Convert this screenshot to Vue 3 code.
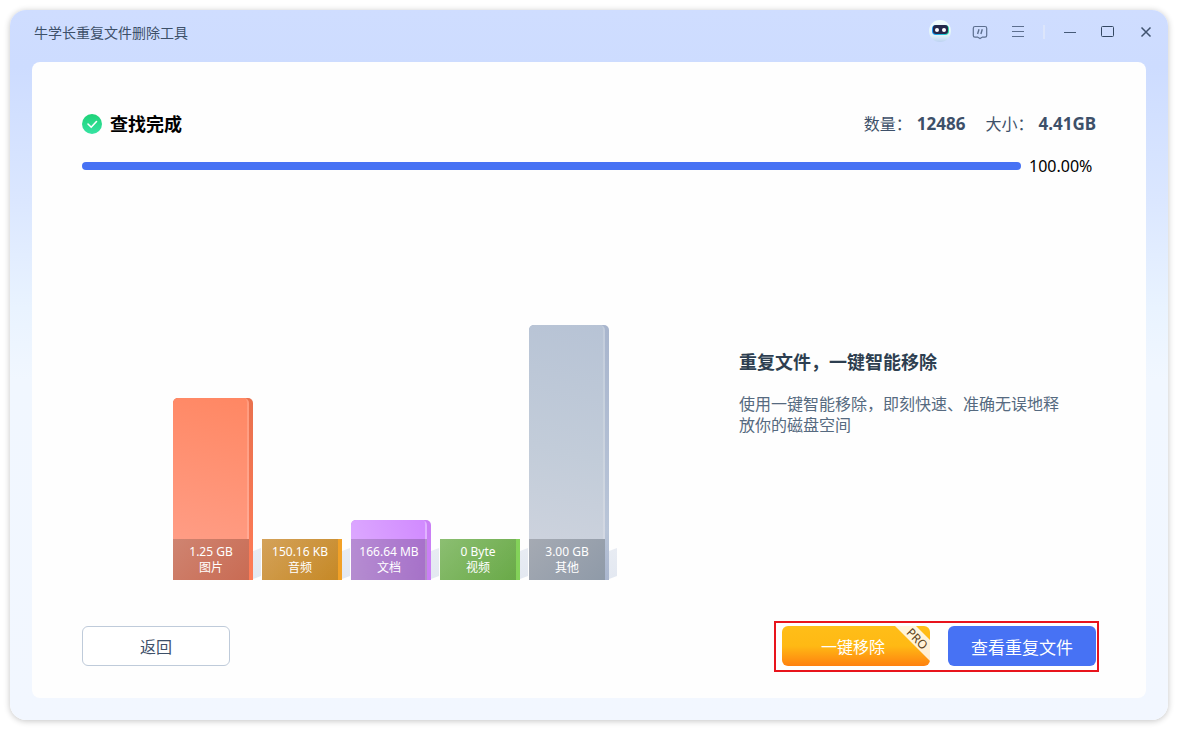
<script setup>
const bars = [
  { key: 'image', size: '1.25 GB', label: '图片', height: 182 },
  { key: 'audio', size: '150.16 KB', label: '音频', height: 41 },
  { key: 'doc', size: '166.64 MB', label: '文档', height: 60 },
  { key: 'video', size: '0 Byte', label: '视频', height: 41 },
  { key: 'other', size: '3.00 GB', label: '其他', height: 255 },
]
</script>

<template>
  <div class="window">
    <header class="titlebar">
      <h1 class="app-name">牛学长重复文件删除工具</h1>
      <nav class="tools">
        <button type="button" class="tool" aria-label="助手">
          <svg width="24" height="26" viewBox="0 0 24 26">
            <defs>
              <linearGradient id="head" x1="0" y1="0" x2="0" y2="1">
                <stop offset="0" stop-color="#f2fdfd" />
                <stop offset="0.7" stop-color="#e0f1f8" />
                <stop offset="1" stop-color="#bdd3f2" />
              </linearGradient>
              <linearGradient id="rim" x1="0" y1="0" x2="1" y2="0">
                <stop offset="0" stop-color="#168df0" />
                <stop offset="0.7" stop-color="#20c8d8" />
                <stop offset="1" stop-color="#22d69a" />
              </linearGradient>
            </defs>
            <circle cx="12" cy="12" r="11" fill="url(#head)" />
            <rect x="4" y="6" width="17" height="10" rx="4" fill="url(#rim)" />
            <rect x="5" y="6" width="15" height="9" rx="3" fill="#242849" />
            <circle cx="9" cy="11" r="2" fill="#fff" />
            <circle cx="16" cy="11" r="2" fill="#fff" />
          </svg>
        </button>
        <button type="button" class="tool" aria-label="反馈">
          <svg width="16" height="16" viewBox="0 0 16 16" fill="none" stroke="#5d6f8f" stroke-width="1.200">
            <path d="M3 2.500h10a1.700 1.700 0 0 1 1.700 1.700v7.200a1.700 1.700 0 0 1-1.700 1.700h-2.500L8 14.500l-2.500-1.400H3a1.700 1.700 0 0 1-1.700-1.700V4.200A1.700 1.700 0 0 1 3 2.500z" />
            <path d="M7 5.200L5.600 10M10.300 5.200L8.900 10" stroke-width="1.400" />
          </svg>
        </button>
        <button type="button" class="tool" aria-label="菜单">
          <svg width="16" height="16" viewBox="0 0 16 16" stroke="#5d6f8f">
            <path d="M2 2.500h12M2 7.500h12M2 12.500h12" />
          </svg>
        </button>
        <span class="divider"></span>
        <button type="button" class="tool" aria-label="最小化">
          <svg width="16" height="16" viewBox="0 0 16 16" stroke="#465a78">
            <path d="M2 8.500h12" />
          </svg>
        </button>
        <button type="button" class="tool" aria-label="最大化">
          <svg width="16" height="16" viewBox="0 0 16 16" fill="none" stroke="#344863">
            <rect x="1.500" y="2.500" width="12" height="10" rx="1" />
          </svg>
        </button>
        <button type="button" class="tool" aria-label="关闭">
          <svg width="16" height="16" viewBox="0 0 16 16" stroke="#40536f" stroke-width="1.500">
            <path d="M3.500 3.500l9 9M12.500 3.500l-9 9" />
          </svg>
        </button>
      </nav>
    </header>

    <main class="panel">
      <section class="summary">
        <h2 class="status">
          <svg width="20" height="20" viewBox="0 0 20 20">
            <defs>
              <linearGradient id="ok" x1="0" y1="0" x2="0" y2="1">
                <stop offset="0" stop-color="#1ed277" />
                <stop offset="1" stop-color="#36e3a3" />
              </linearGradient>
            </defs>
            <circle cx="10" cy="10" r="10" fill="url(#ok)" />
            <path d="M6 10l3.200 3.200L14.500 7.500" fill="none" stroke="#fff" stroke-width="1.600" stroke-linecap="round" />
          </svg>
          查找完成
        </h2>
        <dl class="totals">
          <div><dt>数量：</dt><dd>12486</dd></div>
          <div><dt>大小：</dt><dd>4.41GB</dd></div>
        </dl>
      </section>

      <div class="progress">
        <div class="track" role="progressbar" aria-label="查找进度" aria-valuenow="100"></div>
        <span>100.00%</span>
      </div>

      <section class="result">
        <ul class="chart">
          <li v-for="bar in bars" :key="bar.key" class="slot">
            <div class="bar" :class="bar.key" :style="{ height: bar.height + 'px' }">
              <div class="face"></div>
              <p class="caption">{{ bar.size }}<br />{{ bar.label }}</p>
            </div>
          </li>
        </ul>
        <article class="pitch">
          <h3>重复文件，一键智能移除</h3>
          <p>使用一键智能移除，即刻快速、准确无误地释放你的磁盘空间</p>
        </article>
      </section>

      <footer class="footer">
        <button type="button" class="btn back">返回</button>
        <div class="actions">
          <button type="button" class="btn remove">一键移除<span class="ribbon"><span>PRO</span></span></button>
          <button type="button" class="btn view">查看重复文件</button>
        </div>
      </footer>
    </main>
  </div>
</template>

<style>
body {
  margin: 0;
  background: #fff;
}
</style>

<style scoped>
* {
  box-sizing: border-box;
  margin: 0;
  padding: 0;
}
.window {
  display: flex;
  flex-direction: column;
  min-height: calc(100vh - 20px);
  margin: 10px;
  padding: 0 22px 22px;
  border-radius: 16px;
  background: linear-gradient(#cfddff 0, #cddcff 8%, #dbe7ff 27%, #e9f3ff 42%, #f1f7ff 52%, #f2f7ff 100%);
  box-shadow: 0 1px 6px rgba(0, 0, 0, 0.24);
  font-family: "Noto Sans", "Noto Sans CJK SC", sans-serif;
  color: #3d5069;
}
button {
  font-family: inherit;
  border: 0;
  cursor: pointer;
}
.titlebar {
  display: flex;
  justify-content: space-between;
  height: 52px;
  padding-left: 2px;
}
.app-name {
  font-size: 14px;
  font-weight: 400;
  line-height: 46px;
}
.tools {
  display: flex;
  align-items: center;
  gap: 22px;
  height: 44px;
  margin-right: -8px;
}
.tool {
  display: flex;
  align-items: center;
  justify-content: center;
  width: 16px;
  height: 26px;
  background: none;
}
.tool svg {
  flex: none;
}
.tool:first-child {
  width: 20px;
}
.divider {
  width: 2px;
  height: 14px;
  margin: 0 -5px;
  background: #dce5fb;
}
.panel {
  display: flex;
  flex: 1;
  flex-direction: column;
  padding: 50px 50px 32px;
  border-radius: 8px;
  background: #fefefe;
}
.summary {
  display: flex;
  justify-content: space-between;
  align-items: center;
  height: 24px;
}
.status {
  display: flex;
  align-items: center;
  gap: 8px;
  font-size: 18px;
  line-height: 24px;
  color: #000;
}
.totals {
  display: flex;
  gap: 20px;
}
.totals div {
  display: flex;
  align-items: baseline;
  gap: 5px;
  line-height: 24px;
}
.totals dt {
  font-size: 16px;
}
.totals dd {
  font-size: 17px;
  font-weight: 700;
}
.progress {
  display: flex;
  align-items: center;
  gap: 8px;
  margin-top: 18px;
  font-size: 16px;
  line-height: 24px;
  color: #000;
}
.progress span {
  width: 67px;
}
.track {
  flex: 1;
  height: 8px;
  border-radius: 4px;
  background: #4772f4;
}
.result {
  display: flex;
  flex: 1;
  align-items: flex-end;
  gap: 130px;
  padding: 0 27px 46px 91px;
}
.chart {
  display: flex;
  align-items: flex-end;
  gap: 9px;
  list-style: none;
}
.slot {
  position: relative;
}
.slot::after {
  content: "";
  position: absolute;
  left: 80px;
  bottom: 1px;
  width: 8px;
  height: 31px;
  background: linear-gradient(#e8ecf3, #e3e8f1);
  clip-path: polygon(0 3px, 100% 0, 100% 28px, 0 100%);
}
.bar {
  position: relative;
  width: 80px;
  overflow: hidden;
}
.image,
.doc,
.other {
  border-radius: 5px 5px 0 0;
}
.face {
  width: 76px;
  height: 100%;
  border-right: 2px solid rgba(255, 255, 255, 0.15);
  border-radius: 0 5px 0 0;
}
.image { background: linear-gradient(#e9714e, #ff7c57); }
.image .face { background: linear-gradient(15deg, #ffa28d, #ff8763); }
.audio { background: #f2a127; }
.audio .face { background: linear-gradient(135deg, #ffc36c, #fdaf31); }
.doc { background: #ca7ff5; }
.doc .face { background: linear-gradient(70deg, #deadff, #d18aff); }
.video { background: #83d259; }
.video .face { background: linear-gradient(135deg, #a8e589, #87d95c); }
.other { background: linear-gradient(#a8b5cd, #b9c5d8 80%, #aab6ce); }
.other .face { background: linear-gradient(15deg, #d1d5df, #c2ccd9 50%, #b7c3d5); }
.audio .face,
.video .face {
  border: 0;
  border-radius: 0;
}
.caption {
  position: absolute;
  left: 0;
  bottom: 0;
  width: 76px;
  height: 41px;
  padding-top: 5px;
  background: linear-gradient(135deg, rgba(0, 0, 0, 0.17), rgba(0, 0, 0, 0.22));
  font-size: 12px;
  line-height: 16px;
  text-align: center;
  white-space: nowrap;
  color: #fff;
}
.image .caption { background: linear-gradient(135deg, #cf8471, #c96b53); }
.other .caption { background: linear-gradient(135deg, #a5aab3, #8f9aa8); }
.pitch {
  flex: 1;
  align-self: center;
  padding-top: 28px;
}
.pitch h3 {
  font-size: 18px;
  line-height: 24px;
  color: #2d3e50;
}
.pitch p {
  margin-top: 20px;
  font-size: 16px;
  line-height: 21px;
  color: #566a80;
}
.footer {
  display: flex;
  justify-content: space-between;
}
.btn {
  position: relative;
  width: 148px;
  height: 40px;
  border-radius: 6px;
  font-size: 16px;
  color: #fff;
}
.back {
  border: 1px solid #bfcbda;
  background: #fff;
  color: #3d5069;
}
.actions {
  position: relative;
  display: flex;
  gap: 18px;
}
.actions::before {
  content: "";
  position: absolute;
  inset: -5px -3px -6px -8px;
  border: 2px solid #e8141c;
  background: #fff;
}
.remove {
  padding-right: 6px;
  background: linear-gradient(#ffbe18, #ffb914 50%, #ff8110);
}
.view {
  background: #4772f4;
  font-size: 17px;
}
.ribbon {
  position: absolute;
  top: 0;
  right: 0;
  display: flex;
  align-items: center;
  justify-content: center;
  width: 35px;
  height: 35px;
  padding: 0 0 10px 10px;
  font-size: 12px;
  line-height: 14px;
  color: #5d431b;
}
.ribbon::before {
  content: "";
  position: absolute;
  inset: 0;
  background: linear-gradient(#fff6dc, #ffeed2);
  clip-path: polygon(0 0, 21px 0, 100% 14px, 100% 100%);
}
.ribbon span {
  transform: rotate(45deg);
}
</style>
